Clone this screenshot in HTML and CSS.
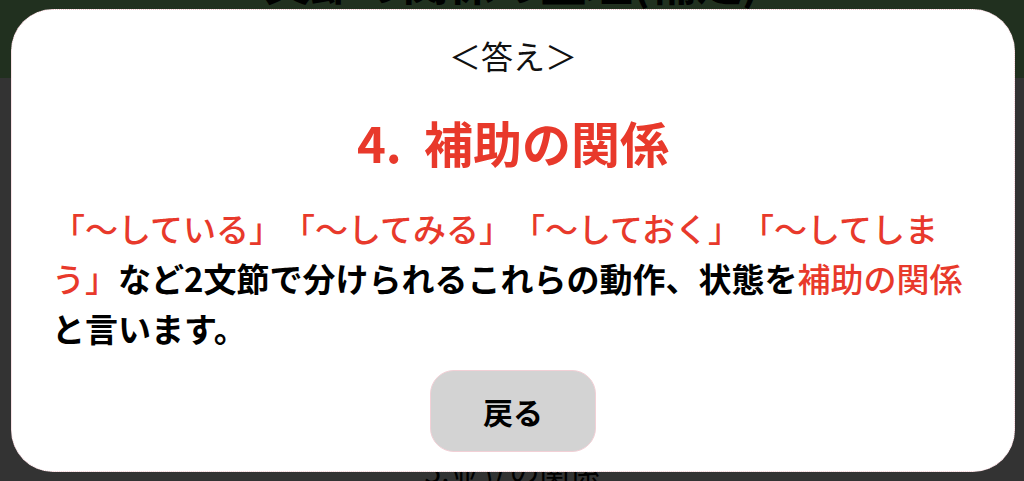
FILE: index.html
```html
<!DOCTYPE html>
<html lang="ja">
<head>
<meta charset="utf-8">
<title>答え</title>
<link rel="stylesheet" href="styles.css">
</head>
<body>
<header class="page-header">
  <h1 class="page-title">文節の関係の整理(補足)</h1>
</header>
<main class="page-body">
  <p class="page-item">5.並立の関係</p>
</main>

<div class="dialog">
  <div class="dialog-label">＜答え＞</div>
  <h2 class="dialog-title">4.&nbsp; 補助の関係</h2>
  <p class="dialog-text"><span class="red">「〜している」「〜してみる」「〜しておく」「〜してしまう」</span>など2文節で分けられるこれらの動作、状態を<span class="red">補助の関係</span>と言います。</p>
  <button class="back-button" type="button">戻る</button>
</div>
</body>
</html>
```

FILE: styles.css
```css
html, body {
  margin: 0;
  padding: 0;
}

body {
  width: 1024px;
  height: 481px;
  overflow: hidden;
  background: #333333;
  font-family: "Noto Sans CJK JP", "Noto Sans", sans-serif;
  position: relative;
  text-spacing-trim: space-all;
}

.page-header {
  height: 78px;
  background: #21301f;
  display: flex;
  justify-content: center;
  align-items: flex-start;
  overflow: hidden;
}

.page-title {
  margin: -50px 0 0 0;
  font-size: 46px;
  line-height: 60px;
  font-weight: 700;
  color: #000;
}

.page-body {
  display: flex;
  justify-content: center;
}

.page-item {
  margin: 372px 0 0 0;
  font-size: 30px;
  line-height: 40px;
  color: #000;
}

.dialog {
  position: absolute;
  left: 11px;
  top: 9px;
  width: 1004px;
  height: 463px;
  box-sizing: border-box;
  background: #fff;
  border: 1px dotted #f0c4cc;
  border-radius: 42px;
  padding: 21px 40px 0 40px;
  display: flex;
  flex-direction: column;
  align-items: center;
}

.dialog-label {
  font-size: 32px;
  line-height: 48px;
  color: #111;
  font-weight: 400;
}

.dialog-title {
  margin: 27px 0 0 0;
  font-size: 49px;
  line-height: 72px;
  font-weight: 700;
  color: #e8392b;
}

.dialog-text {
  align-self: stretch;
  margin: 25px 0 0 0;
  font-size: 33px;
  line-height: 50px;
  font-weight: 700;
  color: #000;
  text-spacing-trim: space-all;
}

.red {
  color: #e8392b;
  font-weight: 500;
}

.back-button {
  margin-top: 17px;
  width: 166px;
  height: 82px;
  border: 1px solid #f2d0d6;
  border-radius: 24px;
  background: #d3d3d3;
  font-family: "Noto Sans CJK JP", "Noto Sans", sans-serif;
  font-size: 30px;
  font-weight: 700;
  color: #000;
  padding: 0;
}
```
